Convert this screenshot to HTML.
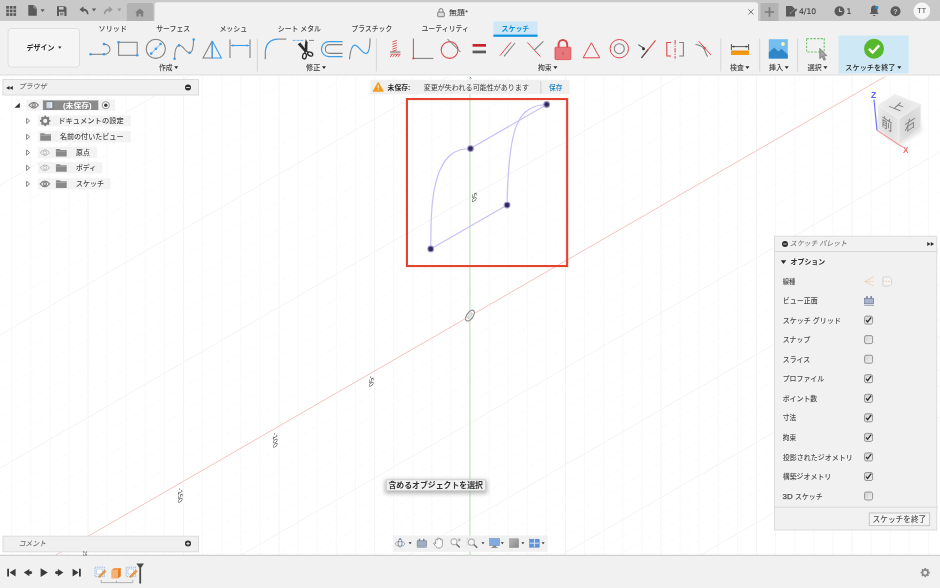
<!DOCTYPE html>
<html lang="ja"><head><meta charset="utf-8"><title>無題*</title>
<style>
html,body{margin:0;padding:0;background:#fff;overflow:hidden}
body{width:940px;height:588px;position:relative}
svg{display:block;position:absolute;left:0;top:0;will-change:transform;font-family:'Liberation Sans', 'Noto Sans CJK JP', sans-serif;}
text{white-space:pre}
</style></head><body>
<svg width="940" height="588" viewBox="0 0 940 588">
<rect x="0" y="0" width="940" height="588" fill="#ffffff"/>
<g clip-path="url(#cv)"><line x1="11.6" y1="75" x2="11.6" y2="555" stroke="#f9f9f9" stroke-width="1"/><line x1="30.7" y1="75" x2="30.7" y2="555" stroke="#f9f9f9" stroke-width="1"/><line x1="49.8" y1="75" x2="49.8" y2="555" stroke="#f9f9f9" stroke-width="1"/><line x1="68.9" y1="75" x2="68.9" y2="555" stroke="#f9f9f9" stroke-width="1"/><line x1="88.0" y1="75" x2="88.0" y2="555" stroke="#f4f4f4" stroke-width="1"/><line x1="107.1" y1="75" x2="107.1" y2="555" stroke="#f9f9f9" stroke-width="1"/><line x1="126.2" y1="75" x2="126.2" y2="555" stroke="#f9f9f9" stroke-width="1"/><line x1="145.3" y1="75" x2="145.3" y2="555" stroke="#f9f9f9" stroke-width="1"/><line x1="164.4" y1="75" x2="164.4" y2="555" stroke="#f9f9f9" stroke-width="1"/><line x1="183.5" y1="75" x2="183.5" y2="555" stroke="#f4f4f4" stroke-width="1"/><line x1="202.6" y1="75" x2="202.6" y2="555" stroke="#f9f9f9" stroke-width="1"/><line x1="221.7" y1="75" x2="221.7" y2="555" stroke="#f9f9f9" stroke-width="1"/><line x1="240.8" y1="75" x2="240.8" y2="555" stroke="#f9f9f9" stroke-width="1"/><line x1="259.9" y1="75" x2="259.9" y2="555" stroke="#f9f9f9" stroke-width="1"/><line x1="279.0" y1="75" x2="279.0" y2="555" stroke="#f4f4f4" stroke-width="1"/><line x1="298.1" y1="75" x2="298.1" y2="555" stroke="#f9f9f9" stroke-width="1"/><line x1="317.2" y1="75" x2="317.2" y2="555" stroke="#f9f9f9" stroke-width="1"/><line x1="336.3" y1="75" x2="336.3" y2="555" stroke="#f9f9f9" stroke-width="1"/><line x1="355.4" y1="75" x2="355.4" y2="555" stroke="#f9f9f9" stroke-width="1"/><line x1="374.5" y1="75" x2="374.5" y2="555" stroke="#f4f4f4" stroke-width="1"/><line x1="393.6" y1="75" x2="393.6" y2="555" stroke="#f9f9f9" stroke-width="1"/><line x1="412.7" y1="75" x2="412.7" y2="555" stroke="#f9f9f9" stroke-width="1"/><line x1="431.8" y1="75" x2="431.8" y2="555" stroke="#f9f9f9" stroke-width="1"/><line x1="450.9" y1="75" x2="450.9" y2="555" stroke="#f9f9f9" stroke-width="1"/><line x1="470.0" y1="75" x2="470.0" y2="555" stroke="#f4f4f4" stroke-width="1"/><line x1="489.1" y1="75" x2="489.1" y2="555" stroke="#f9f9f9" stroke-width="1"/><line x1="508.2" y1="75" x2="508.2" y2="555" stroke="#f9f9f9" stroke-width="1"/><line x1="527.3" y1="75" x2="527.3" y2="555" stroke="#f9f9f9" stroke-width="1"/><line x1="546.4" y1="75" x2="546.4" y2="555" stroke="#f9f9f9" stroke-width="1"/><line x1="565.5" y1="75" x2="565.5" y2="555" stroke="#f4f4f4" stroke-width="1"/><line x1="584.6" y1="75" x2="584.6" y2="555" stroke="#f9f9f9" stroke-width="1"/><line x1="603.7" y1="75" x2="603.7" y2="555" stroke="#f9f9f9" stroke-width="1"/><line x1="622.8" y1="75" x2="622.8" y2="555" stroke="#f9f9f9" stroke-width="1"/><line x1="641.9" y1="75" x2="641.9" y2="555" stroke="#f9f9f9" stroke-width="1"/><line x1="661.0" y1="75" x2="661.0" y2="555" stroke="#f4f4f4" stroke-width="1"/><line x1="680.1" y1="75" x2="680.1" y2="555" stroke="#f9f9f9" stroke-width="1"/><line x1="699.2" y1="75" x2="699.2" y2="555" stroke="#f9f9f9" stroke-width="1"/><line x1="718.3" y1="75" x2="718.3" y2="555" stroke="#f9f9f9" stroke-width="1"/><line x1="737.4" y1="75" x2="737.4" y2="555" stroke="#f9f9f9" stroke-width="1"/><line x1="756.5" y1="75" x2="756.5" y2="555" stroke="#f4f4f4" stroke-width="1"/><line x1="775.6" y1="75" x2="775.6" y2="555" stroke="#f9f9f9" stroke-width="1"/><line x1="794.7" y1="75" x2="794.7" y2="555" stroke="#f9f9f9" stroke-width="1"/><line x1="813.8" y1="75" x2="813.8" y2="555" stroke="#f9f9f9" stroke-width="1"/><line x1="832.9" y1="75" x2="832.9" y2="555" stroke="#f9f9f9" stroke-width="1"/><line x1="852.0" y1="75" x2="852.0" y2="555" stroke="#f4f4f4" stroke-width="1"/><line x1="871.1" y1="75" x2="871.1" y2="555" stroke="#f9f9f9" stroke-width="1"/><line x1="890.2" y1="75" x2="890.2" y2="555" stroke="#f9f9f9" stroke-width="1"/><line x1="909.3" y1="75" x2="909.3" y2="555" stroke="#f9f9f9" stroke-width="1"/><line x1="928.4" y1="75" x2="928.4" y2="555" stroke="#f9f9f9" stroke-width="1"/><line x1="0" y1="959.0" x2="940" y2="416.9" stroke="#f4f4f4" stroke-width="1"/><line x1="0" y1="943.6" x2="940" y2="401.4" stroke="#fbfbfb" stroke-width="1" stroke-dasharray="6 3"/><line x1="0" y1="927.8" x2="940" y2="385.6" stroke="#fbfbfb" stroke-width="1" stroke-dasharray="6 3"/><line x1="0" y1="911.8" x2="940" y2="369.6" stroke="#fbfbfb" stroke-width="1" stroke-dasharray="6 3"/><line x1="0" y1="895.4" x2="940" y2="353.2" stroke="#fbfbfb" stroke-width="1" stroke-dasharray="6 3"/><line x1="0" y1="878.8" x2="940" y2="336.6" stroke="#f4f4f4" stroke-width="1"/><line x1="0" y1="861.9" x2="940" y2="319.7" stroke="#fbfbfb" stroke-width="1" stroke-dasharray="6 3"/><line x1="0" y1="844.6" x2="940" y2="302.4" stroke="#fbfbfb" stroke-width="1" stroke-dasharray="6 3"/><line x1="0" y1="827.1" x2="940" y2="284.9" stroke="#fbfbfb" stroke-width="1" stroke-dasharray="6 3"/><line x1="0" y1="809.1" x2="940" y2="267.0" stroke="#fbfbfb" stroke-width="1" stroke-dasharray="6 3"/><line x1="0" y1="790.9" x2="940" y2="248.7" stroke="#f4f4f4" stroke-width="1"/><line x1="0" y1="772.3" x2="940" y2="230.1" stroke="#fbfbfb" stroke-width="1" stroke-dasharray="6 3"/><line x1="0" y1="753.3" x2="940" y2="211.1" stroke="#fbfbfb" stroke-width="1" stroke-dasharray="6 3"/><line x1="0" y1="734.0" x2="940" y2="191.8" stroke="#fbfbfb" stroke-width="1" stroke-dasharray="6 3"/><line x1="0" y1="714.2" x2="940" y2="172.1" stroke="#fbfbfb" stroke-width="1" stroke-dasharray="6 3"/><line x1="0" y1="694.1" x2="940" y2="151.9" stroke="#f4f4f4" stroke-width="1"/><line x1="0" y1="673.6" x2="940" y2="131.4" stroke="#fbfbfb" stroke-width="1" stroke-dasharray="6 3"/><line x1="0" y1="652.6" x2="940" y2="110.4" stroke="#fbfbfb" stroke-width="1" stroke-dasharray="6 3"/><line x1="0" y1="631.2" x2="940" y2="89.0" stroke="#fbfbfb" stroke-width="1" stroke-dasharray="6 3"/><line x1="0" y1="609.4" x2="940" y2="67.2" stroke="#fbfbfb" stroke-width="1" stroke-dasharray="6 3"/><line x1="0" y1="564.3" x2="940" y2="22.1" stroke="#fbfbfb" stroke-width="1" stroke-dasharray="6 3"/><line x1="0" y1="541.0" x2="940" y2="-1.2" stroke="#fbfbfb" stroke-width="1" stroke-dasharray="6 3"/><line x1="0" y1="517.3" x2="940" y2="-24.9" stroke="#fbfbfb" stroke-width="1" stroke-dasharray="6 3"/><line x1="0" y1="492.9" x2="940" y2="-49.2" stroke="#fbfbfb" stroke-width="1" stroke-dasharray="6 3"/><line x1="0" y1="468.1" x2="940" y2="-74.1" stroke="#f4f4f4" stroke-width="1"/><line x1="0" y1="442.7" x2="940" y2="-99.5" stroke="#fbfbfb" stroke-width="1" stroke-dasharray="6 3"/><line x1="0" y1="416.7" x2="940" y2="-125.5" stroke="#fbfbfb" stroke-width="1" stroke-dasharray="6 3"/><line x1="0" y1="390.1" x2="940" y2="-152.1" stroke="#fbfbfb" stroke-width="1" stroke-dasharray="6 3"/><line x1="0" y1="362.8" x2="940" y2="-179.3" stroke="#fbfbfb" stroke-width="1" stroke-dasharray="6 3"/><line x1="0" y1="335.0" x2="940" y2="-207.2" stroke="#f4f4f4" stroke-width="1"/><line x1="0" y1="306.4" x2="940" y2="-235.8" stroke="#fbfbfb" stroke-width="1" stroke-dasharray="6 3"/><line x1="0" y1="277.2" x2="940" y2="-265.0" stroke="#fbfbfb" stroke-width="1" stroke-dasharray="6 3"/><line x1="0" y1="247.2" x2="940" y2="-294.9" stroke="#fbfbfb" stroke-width="1" stroke-dasharray="6 3"/><line x1="0" y1="216.5" x2="940" y2="-325.6" stroke="#fbfbfb" stroke-width="1" stroke-dasharray="6 3"/><line x1="0" y1="185.1" x2="940" y2="-357.1" stroke="#f4f4f4" stroke-width="1"/><line x1="0" y1="152.8" x2="940" y2="-389.4" stroke="#fbfbfb" stroke-width="1" stroke-dasharray="6 3"/><line x1="0" y1="119.7" x2="940" y2="-422.5" stroke="#fbfbfb" stroke-width="1" stroke-dasharray="6 3"/><line x1="0" y1="85.7" x2="940" y2="-456.5" stroke="#fbfbfb" stroke-width="1" stroke-dasharray="6 3"/><line x1="0" y1="50.8" x2="940" y2="-491.4" stroke="#fbfbfb" stroke-width="1" stroke-dasharray="6 3"/><line x1="0" y1="15.0" x2="940" y2="-527.2" stroke="#f4f4f4" stroke-width="1"/><line x1="0" y1="-21.8" x2="940" y2="-564.0" stroke="#fbfbfb" stroke-width="1" stroke-dasharray="6 3"/><line x1="0" y1="-59.6" x2="940" y2="-601.8" stroke="#fbfbfb" stroke-width="1" stroke-dasharray="6 3"/><line x1="0" y1="-98.5" x2="940" y2="-640.7" stroke="#fbfbfb" stroke-width="1" stroke-dasharray="6 3"/><line x1="0" y1="-138.4" x2="940" y2="-680.6" stroke="#fbfbfb" stroke-width="1" stroke-dasharray="6 3"/><line x1="0" y1="-179.6" x2="940" y2="-721.8" stroke="#f4f4f4" stroke-width="1"/><line x1="0" y1="-221.9" x2="940" y2="-764.1" stroke="#fbfbfb" stroke-width="1" stroke-dasharray="6 3"/><line x1="0" y1="-265.5" x2="940" y2="-807.7" stroke="#fbfbfb" stroke-width="1" stroke-dasharray="6 3"/><line x1="0" y1="-310.4" x2="940" y2="-852.6" stroke="#fbfbfb" stroke-width="1" stroke-dasharray="6 3"/><line x1="0" y1="-356.7" x2="940" y2="-898.9" stroke="#fbfbfb" stroke-width="1" stroke-dasharray="6 3"/><line x1="0" y1="-404.4" x2="940" y2="-946.6" stroke="#f4f4f4" stroke-width="1"/><line x1="0" y1="-453.6" x2="940" y2="-995.8" stroke="#fbfbfb" stroke-width="1" stroke-dasharray="6 3"/><line x1="0" y1="-504.4" x2="940" y2="-1046.6" stroke="#fbfbfb" stroke-width="1" stroke-dasharray="6 3"/><line x1="0" y1="-556.9" x2="940" y2="-1099.1" stroke="#fbfbfb" stroke-width="1" stroke-dasharray="6 3"/><line x1="0" y1="-611.1" x2="940" y2="-1153.3" stroke="#fbfbfb" stroke-width="1" stroke-dasharray="6 3"/><line x1="0" y1="-667.1" x2="940" y2="-1209.3" stroke="#f4f4f4" stroke-width="1"/><line x1="0" y1="-725.1" x2="940" y2="-1267.3" stroke="#fbfbfb" stroke-width="1" stroke-dasharray="6 3"/><line x1="0" y1="-785.0" x2="940" y2="-1327.2" stroke="#fbfbfb" stroke-width="1" stroke-dasharray="6 3"/><line x1="0" y1="-847.1" x2="940" y2="-1389.3" stroke="#fbfbfb" stroke-width="1" stroke-dasharray="6 3"/><line x1="0" y1="-911.5" x2="940" y2="-1453.7" stroke="#fbfbfb" stroke-width="1" stroke-dasharray="6 3"/></g>
<defs><clipPath id="cv"><rect x="0" y="75" width="940" height="480"/></clipPath></defs>
<line x1="55.6" y1="555" x2="887.8" y2="75" stroke="#f5c3bf" stroke-width="1"/>
<line x1="469.9" y1="75" x2="469.9" y2="555" stroke="#bdebba" stroke-width="1.2"/>
<text transform="matrix(0,1,-0.866,0.5,371.6,381)" font-size="7.4" fill="#3c3c3c" text-anchor="middle" dy="0.36em">-50</text>
<text transform="matrix(0,1,-0.866,0.5,275.2,439.8)" font-size="7.4" fill="#3c3c3c" text-anchor="middle" dy="0.36em">-100</text>
<text transform="matrix(0,1,-0.866,0.5,180.6,495)" font-size="7.4" fill="#3c3c3c" text-anchor="middle" dy="0.36em">-150</text>
<text transform="matrix(0,1,-0.866,0.5,474.8,197.3)" font-size="7.4" fill="#3c3c3c" text-anchor="middle" dy="0.36em">50</text>
<g transform="translate(470,315.6) rotate(-55)"><ellipse rx="6.2" ry="3.1" fill="#ffffff" fill-opacity="0.55" stroke="#8a8a8a" stroke-width="1.2"/><ellipse rx="3.4" ry="1.2" fill="none" stroke="#a8a8a8" stroke-width="0.6"/></g>
<rect x="406.95" y="99.05" width="160.2" height="167" fill="none" stroke="#e2442e" stroke-width="2.1"/>
<path d="M430.7,248.9 C430.8,243.1 430.9,223.8 431.5,214.0 C432.1,204.2 432.8,197.6 434.2,190.2 C435.6,182.8 437.7,175.1 440.2,169.4 C442.7,163.7 445.9,159.2 449.1,156.0 C452.3,152.8 455.9,151.2 459.5,150.0 C463.1,148.8 468.7,148.8 470.5,148.6" fill="none" stroke="#cabff6" stroke-width="1.2"/>
<path d="M507.1,205.1 C507.2,201.6 507.3,191.7 507.7,184.3 C508.1,176.9 508.7,167.9 509.5,160.5 C510.3,153.1 511.1,145.8 512.5,139.6 C513.9,133.4 515.5,127.8 517.6,123.3 C519.7,118.8 522.0,115.1 525.0,112.3 C528.0,109.5 531.8,107.6 535.4,106.3 C539.0,105.0 544.8,104.8 546.7,104.5" fill="none" stroke="#cabff6" stroke-width="1.2"/>
<line x1="430.7" y1="248.9" x2="507.1" y2="205.1" stroke="#cabff6" stroke-width="1.2"/>
<line x1="470.5" y1="148.6" x2="546.7" y2="104.5" stroke="#cabff6" stroke-width="1.2"/>
<circle cx="546.7" cy="104.5" r="3.4" fill="#9d95c4"/>
<circle cx="546.7" cy="104.5" r="2.3" fill="#34265f"/>
<circle cx="470.5" cy="148.6" r="3.4" fill="#9d95c4"/>
<circle cx="470.5" cy="148.6" r="2.3" fill="#34265f"/>
<circle cx="507.1" cy="205.1" r="3.4" fill="#9d95c4"/>
<circle cx="507.1" cy="205.1" r="2.3" fill="#34265f"/>
<circle cx="430.7" cy="248.9" r="3.4" fill="#9d95c4"/>
<circle cx="430.7" cy="248.9" r="2.3" fill="#34265f"/>
<rect x="0" y="0" width="940" height="21" fill="#c9c9c9"/>
<path d="M126.8,21V5.5a2.5,2.5 0 0 1 2.5,-2.5h21.6a2.5,2.5 0 0 1 2.5,2.5V21z" fill="#b3b3b3"/>
<path d="M154.6,21V5.3a3,3 0 0 1 3,-3h597.4a3,3 0 0 1 3,3V21z" fill="#f1f1f1"/>
<rect x="0" y="21" width="940" height="54" fill="#f1f1f1"/>
<linearGradient id="tbsh" x1="0" y1="0" x2="0" y2="1"><stop offset="0" stop-color="#dcdcdc"/><stop offset="1" stop-color="#ffffff"/></linearGradient>
<rect x="0" y="74.5" width="940" height="2" fill="url(#tbsh)"/>
<rect x="6.2" y="6.0" width="2.7" height="2.7" fill="#5a5a5a"/>
<rect x="6.2" y="9.6" width="2.7" height="2.7" fill="#5a5a5a"/>
<rect x="6.2" y="13.2" width="2.7" height="2.7" fill="#5a5a5a"/>
<rect x="9.8" y="6.0" width="2.7" height="2.7" fill="#5a5a5a"/>
<rect x="9.8" y="9.6" width="2.7" height="2.7" fill="#5a5a5a"/>
<rect x="9.8" y="13.2" width="2.7" height="2.7" fill="#5a5a5a"/>
<rect x="13.4" y="6.0" width="2.7" height="2.7" fill="#5a5a5a"/>
<rect x="13.4" y="9.6" width="2.7" height="2.7" fill="#5a5a5a"/>
<rect x="13.4" y="13.2" width="2.7" height="2.7" fill="#5a5a5a"/>
<path d="M28.3,5h5.5l3,3v7.8h-8.5z" fill="#5a5a5a"/>
<path d="M34,5v3h3" fill="none" stroke="#c9c9c9" stroke-width="0.6"/>
<path d="M40.5,9.2h4.2l-2.1,2.8z" fill="#5a5a5a"/>
<path d="M57,6.2h8l1.5,1.5v8.3h-9.5z" fill="#5a5a5a"/>
<rect x="59" y="7" width="4.6" height="2.6" fill="#c9c9c9"/>
<rect x="59" y="11.8" width="5.4" height="4.2" fill="#c9c9c9"/>
<rect x="60" y="12.8" width="3.4" height="0.8" fill="#5a5a5a"/>
<rect x="60" y="14.4" width="3.4" height="0.8" fill="#5a5a5a"/>
<path d="M83.5,6.2l-4,3.3l4,3.3v-2.1c2.2,0 3.4,1.2 3.4,3.6h1.6c0,-3.6 -2,-5.6 -5,-5.6z" fill="#5a5a5a"/>
<path d="M91.9,8.6h4.2l-2.1,2.8z" fill="#5a5a5a"/>
<path d="M108.8,6.2l4,3.3l-4,3.3v-2.1c-2.2,0 -3.4,1.2 -3.4,3.6h-1.6c0,-3.6 2,-5.6 5,-5.6z" fill="#9a9a9a"/>
<path d="M117.2,8.6h4.2l-2.1,2.8z" fill="#9a9a9a"/>
<path d="M139.8,8.6l-4.6,4h1.2v4h2.4v-2.6h2v2.6h2.4v-4h1.2z" fill="#7d7d7d"/>
<path d="M439,12v-1.4a2,2 0 0 1 4,0v1.4" fill="none" stroke="#777" stroke-width="1"/>
<rect x="437.7" y="12.1" width="6.6" height="4.6" fill="#dcdcdc" stroke="#777" stroke-width="0.9" rx="0.6"/>
<text x="449" y="12.6" dy="0.31em" font-size="7.2" fill="#3a3a3a" font-weight="500" textLength="19" lengthAdjust="spacingAndGlyphs">無題*</text>
<path d="M748.3,9.3l5.2,5.2M753.5,9.3l-5.2,5.2" fill="none" stroke="#666" stroke-width="0.9"/>
<rect x="760.5" y="3" width="18" height="18" fill="#b3b3b3"/>
<path d="M769.5,7.3v9.4M764.8,12h9.4" fill="none" stroke="#7a7a7a" stroke-width="1.7"/>
<path d="M786,6h6l3,3v7.5h-9z" fill="#5a5a5a"/>
<path d="M790.5,13.5l5.5,-4.5" fill="none" stroke="#c9c9c9" stroke-width="1.4"/>
<path d="M790.8,14.2l0.6,-2l4.6,-3.8l1.3,1.5l-4.6,3.8z" fill="#5a5a5a"/>
<text x="799" y="11.3" dy="0.31em" font-size="7.7" fill="#3c3c3c" textLength="17.2" lengthAdjust="spacingAndGlyphs" font-family="DejaVu Sans, sans-serif" stroke="#444" stroke-width="0.12">4/10</text>
<circle cx="839.5" cy="11.3" r="5" fill="#5a5a5a"/>
<path d="M839.5,8.2v3.3h2.6" fill="none" stroke="#c9c9c9" stroke-width="1.2"/>
<text x="846.4" y="11.3" dy="0.31em" font-size="7.7" fill="#3c3c3c" font-family="DejaVu Sans, sans-serif" stroke="#444" stroke-width="0.12">1</text>
<path d="M874.2,5.5c2.4,0 3.2,1.8 3.2,4v2.8l1.4,1.8h-9.2l1.4,-1.8v-2.8c0,-2.2 0.8,-4 3.2,-4z" fill="#5a5a5a"/>
<path d="M873,15c0,1.6 2.4,1.6 2.4,0z" fill="#5a5a5a"/>
<rect x="875.3" y="6.1" width="3" height="3" fill="#1e90e0" rx="0.7"/>
<circle cx="895.5" cy="11.3" r="5" fill="#5a5a5a"/>
<text x="895.5" y="11.5" dy="0.31em" font-size="8" fill="#c9c9c9" font-weight="700" text-anchor="middle">?</text>
<circle cx="921.9" cy="10.9" r="8.3" fill="#f6f6f6"/>
<text x="921.7" y="11" dy="0.31em" font-size="7.4" fill="#444" text-anchor="middle" textLength="8.8" lengthAdjust="spacingAndGlyphs">TT</text>
<text x="98.6" y="28.5" dy="0.31em" font-size="7.2" fill="#444444" font-weight="500" textLength="28.4" lengthAdjust="spacingAndGlyphs">ソリッド</text>
<text x="156.2" y="28.5" dy="0.31em" font-size="7.2" fill="#444444" font-weight="500" textLength="34.0" lengthAdjust="spacingAndGlyphs">サーフェス</text>
<text x="219.4" y="28.5" dy="0.31em" font-size="7.2" fill="#444444" font-weight="500" textLength="27.8" lengthAdjust="spacingAndGlyphs">メッシュ</text>
<text x="277.8" y="28.5" dy="0.31em" font-size="7.2" fill="#444444" font-weight="500" textLength="43.1" lengthAdjust="spacingAndGlyphs">シート メタル</text>
<text x="351.5" y="28.5" dy="0.31em" font-size="7.2" fill="#444444" font-weight="500" textLength="40.7" lengthAdjust="spacingAndGlyphs">プラスチック</text>
<text x="421.4" y="28.5" dy="0.31em" font-size="7.2" fill="#444444" font-weight="500" textLength="47.6" lengthAdjust="spacingAndGlyphs">ユーティリティ</text>
<rect x="493.4" y="21.5" width="44.2" height="13.6" fill="#cfe7f6"/>
<rect x="493.4" y="34.6" width="44.2" height="2.2" fill="#0d94e0"/>
<text x="501.6" y="28.5" dy="0.31em" font-size="7.2" fill="#0b8fd6" font-weight="700" textLength="27.6" lengthAdjust="spacingAndGlyphs">スケッチ</text>
<rect x="8" y="28.5" width="71.5" height="38.5" fill="#f5f5f5" stroke="#dedede" stroke-width="1" rx="3"/>
<text x="26.6" y="47.5" dy="0.31em" font-size="7.4" fill="#2a2a2a" font-weight="700" textLength="27.8" lengthAdjust="spacingAndGlyphs">デザイン</text>
<path d="M58.099999999999994,46.5h3.4l-1.7,2.2z" fill="#2a2a2a"/>
<text x="159" y="67.4" dy="0.31em" font-size="7.2" fill="#444444" font-weight="500" textLength="13.6" lengthAdjust="spacingAndGlyphs">作成</text>
<path d="M174.20000000000002,66.25h4l-2.0,2.7z" fill="#2a2a2a"/>
<text x="306" y="67.4" dy="0.31em" font-size="7.2" fill="#444444" font-weight="500" textLength="14.4" lengthAdjust="spacingAndGlyphs">修正</text>
<path d="M322.0,66.25h4l-2.0,2.7z" fill="#2a2a2a"/>
<text x="537.9" y="67.4" dy="0.31em" font-size="7.2" fill="#444444" font-weight="500" textLength="13.9" lengthAdjust="spacingAndGlyphs">拘束</text>
<path d="M553.4,66.25h4l-2.0,2.7z" fill="#2a2a2a"/>
<text x="730" y="67.4" dy="0.31em" font-size="7.2" fill="#444444" font-weight="500" textLength="13.8" lengthAdjust="spacingAndGlyphs">検査</text>
<path d="M745.4,66.25h4l-2.0,2.7z" fill="#2a2a2a"/>
<text x="768.7" y="67.4" dy="0.31em" font-size="7.2" fill="#444444" font-weight="500" textLength="14.4" lengthAdjust="spacingAndGlyphs">挿入</text>
<path d="M784.6999999999999,66.25h4l-2.0,2.7z" fill="#2a2a2a"/>
<text x="807.4" y="67.4" dy="0.31em" font-size="7.2" fill="#444444" font-weight="500" textLength="14.4" lengthAdjust="spacingAndGlyphs">選択</text>
<path d="M823.4,66.25h4l-2.0,2.7z" fill="#2a2a2a"/>
<line x1="257.3" y1="38.5" x2="257.3" y2="71.5" stroke="#d6d6d6" stroke-width="1"/>
<line x1="376.4" y1="38.5" x2="376.4" y2="71.5" stroke="#d6d6d6" stroke-width="1"/>
<line x1="720.8" y1="38.5" x2="720.8" y2="71.5" stroke="#d6d6d6" stroke-width="1"/>
<line x1="759.7" y1="38.5" x2="759.7" y2="71.5" stroke="#d6d6d6" stroke-width="1"/>
<line x1="797.6" y1="38.5" x2="797.6" y2="71.5" stroke="#d6d6d6" stroke-width="1"/>
<path d="M90.6,54.3h13.4" fill="none" stroke="#808080" stroke-width="1.05"/>
<path d="M104,54.3a6,5.1 0 0 0 0,-10.2" fill="none" stroke="#808080" stroke-width="1.05"/>
<circle cx="90.6" cy="54.3" r="1.3" fill="#3d9cea"/>
<circle cx="104" cy="54.3" r="1.3" fill="#3d9cea"/>
<circle cx="104" cy="44.1" r="1.3" fill="#3d9cea"/>
<rect x="118.6" y="42.3" width="18.6" height="13" fill="none" stroke="#808080" stroke-width="1.05"/>
<circle cx="118.6" cy="42.3" r="1.3" fill="#3d9cea"/>
<circle cx="137.2" cy="55.3" r="1.3" fill="#3d9cea"/>
<circle cx="155.8" cy="48.8" r="9.6" fill="none" stroke="#808080" stroke-width="1.05"/>
<path d="M151.2,53.6l9.4,-9.6" fill="none" stroke="#62aeee" stroke-width="0.9"/>
<circle cx="151.2" cy="53.6" r="1.3" fill="#3d9cea"/>
<circle cx="155.9" cy="48.8" r="1.3" fill="#3d9cea"/>
<circle cx="160.6" cy="44" r="1.3" fill="#3d9cea"/>
<path d="M174.6,58.5c0,-9 2,-12.5 4.4,-13.2c3.5,-1 6,6.5 10,7.6c3.5,0.5 4.4,-6 4.6,-13.5" fill="none" stroke="#808080" stroke-width="1.05"/>
<circle cx="174.6" cy="58.7" r="1.3" fill="#3d9cea"/>
<circle cx="179" cy="45.4" r="1.3" fill="#3d9cea"/>
<circle cx="189.6" cy="52.8" r="1.3" fill="#3d9cea"/>
<circle cx="193.7" cy="39.5" r="1.3" fill="#3d9cea"/>
<path d="M212.2,41l-9.2,17h9.2z" fill="none" stroke="#808080" stroke-width="1.05"/>
<path d="M212.2,41l9.2,17h-9.2z" fill="none" stroke="#3d9cea" stroke-width="1.1"/>
<path d="M230,39.5v18.5M250,39.5v18.5" fill="none" stroke="#808080" stroke-width="1.05"/>
<path d="M231,45.5h18" fill="none" stroke="#3d9cea" stroke-width="1.1"/>
<path d="M231,45.5l2.5,-1.3v2.6zM249,45.5l-2.5,-1.3v2.6z" fill="#3d9cea"/>
<path d="M265.3,59.2V52.7" fill="none" stroke="#808080" stroke-width="1.1"/>
<path d="M265.3,52.7C265.5,45 269.2,39.5 278.1,39.1" fill="none" stroke="#3d9cea" stroke-width="1.2"/>
<path d="M278.1,39.1H286.3" fill="none" stroke="#808080" stroke-width="1.1"/>
<path d="M292.6,40.4h11.4" fill="none" stroke="#6fb6ee" stroke-width="1.0" stroke-dasharray="3 0.9"/>
<path d="M309,40.4h5" fill="none" stroke="#808080" stroke-width="1.0"/>
<path d="M297.7,44.3l2.6,-1.8l6.6,8.6l-1.8,1.4z" fill="#2c2c2c"/>
<path d="M305.7,39l1.8,3.2l-0.2,9.2l-2.4,0.4l-0.1,-6.6z" fill="#2c2c2c"/>
<ellipse cx="304.5" cy="56.1" rx="1.9" ry="2.9" fill="none" stroke="#2c2c2c" stroke-width="1.3" transform="rotate(12 304.5 56.1)"/>
<ellipse cx="310.2" cy="54" rx="2.7" ry="1.8" fill="none" stroke="#2c2c2c" stroke-width="1.3" transform="rotate(28 310.2 54)"/>
<path d="M305.3,51.4l-0.6,2M306.6,51.2l1.6,1.4" fill="none" stroke="#2c2c2c" stroke-width="1.3"/>
<path d="M342.5,41.6h-13.6a7.5,7.5 0 0 0 0,15h13.6" fill="none" stroke="#3d9cea" stroke-width="1.15"/>
<path d="M342.5,44.6h-12.8a4.4,4.4 0 0 0 0,8.8h12.8" fill="none" stroke="#808080" stroke-width="1.1"/>
<path d="M349.5,59.2c0.3,-4 0.8,-7 1.6,-9.4" fill="none" stroke="#808080" stroke-width="1.1"/>
<path d="M351.1,49.8c1,-3 2.2,-4.6 3.6,-4.7c3.8,-0.2 6.6,8.2 11.2,8.4c1.8,0 2.8,-2.2 3.4,-5.4" fill="none" stroke="#3d9cea" stroke-width="1.15"/>
<path d="M369.3,48.1c0.6,-3 0.8,-6.4 0.8,-9.8" fill="none" stroke="#808080" stroke-width="1.1"/>
<path d="M390,52h10.4" fill="none" stroke="#666" stroke-width="1"/>
<path d="M392.4,42l4.4,-1.6M392.4,44.4l4.4,-1.6M392.4,46.8l4.4,-1.6M392.4,49.2l4.4,-1.6M392.4,51.4l4.4,-1.6" fill="none" stroke="#dd464a" stroke-width="0.9"/>
<path d="M390.3,56.8l1.8,-2.4M392.9,56.8l1.8,-2.4M395.5,56.8l1.8,-2.4M398.1,56.8l1.8,-2.4" fill="none" stroke="#dd464a" stroke-width="1"/>
<path d="M390.6,54.2h9.8" fill="none" stroke="#dd464a" stroke-width="0.8"/>
<path d="M413.4,38.5v20" fill="none" stroke="#dd464a" stroke-width="1.0"/>
<path d="M413.4,58.4h20" fill="none" stroke="#808080" stroke-width="1.05"/>
<circle cx="413.4" cy="58.4" r="1.1" fill="#dd464a"/>
<circle cx="449.6" cy="50" r="8.4" fill="none" stroke="#dd464a" stroke-width="1.1"/>
<path d="M447.5,39l13,13" fill="none" stroke="#808080" stroke-width="1.05"/>
<rect x="472.6" y="44" width="13.4" height="2.7" fill="#c8242c"/>
<rect x="472.6" y="50.6" width="13.4" height="2.7" fill="#5a5a5a"/>
<path d="M500,55.6l11,-13.4" fill="none" stroke="#dd464a" stroke-width="1.0"/>
<path d="M504,56.4l11,-13.4" fill="none" stroke="#808080" stroke-width="1.05"/>
<path d="M527.4,42.5l13,14" fill="none" stroke="#dd464a" stroke-width="1.0"/>
<path d="M534.4,50l9,-8.6" fill="none" stroke="#808080" stroke-width="1.05"/>
<path d="M558.6,47.5v-3.2a4.3,4.3 0 0 1 8.6,0v3.2" fill="none" stroke="#dd464a" stroke-width="2"/>
<rect x="555" y="47.2" width="15.8" height="12.4" fill="#e7777b" stroke="#dd464a" stroke-width="0.8" rx="0.8"/>
<rect x="562.5" y="52" width="0.9" height="3" fill="#c9444a"/>
<path d="M591.4,42.8l8.3,15h-16.6z" fill="none" stroke="#dd464a" stroke-width="1.0"/>
<circle cx="619.3" cy="48.7" r="9.2" fill="none" stroke="#dd464a" stroke-width="1.0"/>
<circle cx="619.3" cy="48.7" r="5" fill="none" stroke="#808080" stroke-width="1.05"/>
<path d="M641.5,57.8l14,-17.5" fill="none" stroke="#dd464a" stroke-width="1.1"/>
<path d="M641.5,57.8l6.6,-8.2" fill="none" stroke="#555" stroke-width="1.2"/>
<path d="M638.2,44.6l5.4,3.4" fill="none" stroke="#555" stroke-width="1.1"/>
<circle cx="643.5" cy="48.8" r="1.5" fill="#333"/>
<path d="M671,42.5h-4.2v13.5h4.2" fill="none" stroke="#dd464a" stroke-width="1.1"/>
<path d="M679.2,42.5h4.2v13.5h-4.2" fill="none" stroke="#808080" stroke-width="1.1"/>
<path d="M675.1,40v18.6" fill="none" stroke="#dd464a" stroke-width="1" stroke-dasharray="4.5 1.2 1.2 1.2"/>
<path d="M695.5,44.5c4,0.5 7,2 8.6,4.4c1.6,2.6 1.6,5.6 3.6,7.6" fill="none" stroke="#808080" stroke-width="1.1"/>
<path d="M698.5,41l12.5,14" fill="none" stroke="#dd464a" stroke-width="1.0"/>
<circle cx="704.6" cy="47.8" r="1.1" fill="#dd464a"/>
<path d="M731.4,44v6M748.6,44v6" fill="none" stroke="#444" stroke-width="0.9"/>
<path d="M731.8,46.6h16.4" fill="none" stroke="#444" stroke-width="0.9"/>
<path d="M731.8,46.6l2.4,-1.2v2.4zM748.2,46.6l-2.4,-1.2v2.4z" fill="#444"/>
<rect x="731" y="50.6" width="18" height="4.4" fill="#f29a12"/>
<path d="M733,50.6v1.8M735,50.6v1.2M737,50.6v1.8M739,50.6v1.2M741,50.6v1.8M743,50.6v1.2M745,50.6v1.8M747,50.6v1.2" fill="none" stroke="#c87400" stroke-width="0.5"/>
<rect x="768.8" y="39.2" width="19" height="19.4" fill="#74bdf0"/>
<path d="M768.8,58.6v-6l5.4,-5.2l4.2,4l3,-2.6l6.4,5.6v4.2z" fill="#2f86c8"/>
<circle cx="783" cy="44" r="1.9" fill="#fdf3b0"/>
<rect x="806.6" y="38.6" width="17.6" height="13.4" fill="none" stroke="#6cc470" stroke-width="1.1" stroke-dasharray="2.2 1.3"/>
<path d="M819.8,48.4v10.2l2.3,-2.1l1.8,3.7l1.6,-0.8l-1.8,-3.6l3.1,-0.2z" fill="#a6a6a6" stroke="#666" stroke-width="0.7"/>
<rect x="838.5" y="35.5" width="70.2" height="38" fill="#cfe8f6"/>
<circle cx="874" cy="48.7" r="10" fill="#56b82c"/>
<path d="M869,48.8l3.6,3.8l6.6,-7.2" fill="none" stroke="#fff" stroke-width="2.4"/>
<text x="845.3" y="67.4" dy="0.31em" font-size="7.2" fill="#2a2a2a" font-weight="500" textLength="50.2" lengthAdjust="spacingAndGlyphs">スケッチを終了</text>
<path d="M897.3,66.25h4l-2.0,2.7z" fill="#2a2a2a"/>
<rect x="3" y="79.5" width="195.5" height="15.5" fill="#f0f0f0" stroke="#dcdcdc" stroke-width="1"/>
<path d="M9.5,86v3.8l-3.4,-1.9zM12.8,86v3.8l-3.4,-1.9z" fill="#2a2a2a"/>
<text x="18.4" y="87" dy="0.31em" font-size="7.2" fill="#727272" font-weight="500" textLength="28" lengthAdjust="spacingAndGlyphs" font-style="italic">ブラウザ</text>
<circle cx="188" cy="87.4" r="3" fill="#2e2e2e"/>
<rect x="186.2" y="87" width="3.6" height="0.9" fill="#f0f0f0"/>
<path d="M19.8,102.8v4.9h-5.3z" fill="#333"/>
<rect x="26.4" y="99.60000000000001" width="88.6" height="11.2" fill="#f3f3f3"/>
<path d="M29.000000000000004,105.2q4.7,-5.6 9.4,0q-4.7,5.6 -9.4,0z" fill="#fff" stroke="#858585" stroke-width="1.25"/>
<circle cx="33.7" cy="105.2" r="1.7" fill="#c8c8c8" stroke="#858585" stroke-width="1.1"/>
<rect x="42.9" y="100.4" width="55.4" height="9.6" fill="#8b8b8b"/>
<path d="M46.2,101.60000000000001h6.6v7h-6.6z" fill="#e8ecf2" stroke="#5c6470" stroke-width="0.7"/>
<path d="M46.6,102.0h4v6.2h-4z" fill="#cfd6e0"/>
<text x="63" y="105.3" dy="0.31em" font-size="7.2" fill="#ffffff" font-weight="700" textLength="28.6" lengthAdjust="spacingAndGlyphs">(未保存)</text>
<circle cx="105.8" cy="105.2" r="3.6" fill="#fafafa" stroke="#8a8a8a" stroke-width="0.9"/>
<circle cx="105.8" cy="105.2" r="1.7" fill="#3a3a3a"/>
<path d="M26.6,118.30000000000001l3,2.6l-3,2.6z" fill="#fff" stroke="#666" stroke-width="0.8"/>
<rect x="38" y="115.30000000000001" width="92.8" height="11.2" fill="#f3f3f3"/>
<g transform="translate(45.2,120.9)"><circle r="3.1" fill="none" stroke="#7e7e7e" stroke-width="2"/><rect x="-0.95" y="-5.2" width="1.9" height="2.4" fill="#7e7e7e" transform="rotate(0)"/><rect x="-0.95" y="-5.2" width="1.9" height="2.4" fill="#7e7e7e" transform="rotate(45)"/><rect x="-0.95" y="-5.2" width="1.9" height="2.4" fill="#7e7e7e" transform="rotate(90)"/><rect x="-0.95" y="-5.2" width="1.9" height="2.4" fill="#7e7e7e" transform="rotate(135)"/><rect x="-0.95" y="-5.2" width="1.9" height="2.4" fill="#7e7e7e" transform="rotate(180)"/><rect x="-0.95" y="-5.2" width="1.9" height="2.4" fill="#7e7e7e" transform="rotate(225)"/><rect x="-0.95" y="-5.2" width="1.9" height="2.4" fill="#7e7e7e" transform="rotate(270)"/><rect x="-0.95" y="-5.2" width="1.9" height="2.4" fill="#7e7e7e" transform="rotate(315)"/></g>
<text x="58.2" y="121.0" dy="0.31em" font-size="7.2" fill="#484848" font-weight="500" textLength="65.6" lengthAdjust="spacingAndGlyphs">ドキュメントの設定</text>
<path d="M26.6,134.20000000000002l3,2.6l-3,2.6z" fill="#fff" stroke="#666" stroke-width="0.8"/>
<rect x="38" y="131.20000000000002" width="92.8" height="11.2" fill="#f3f3f3"/>
<path d="M40.2,133.20000000000002h4l0.8,1h6v6.6h-10.8z" fill="#8a8a8a"/>
<path d="M40.2,135.4h10.8" fill="none" stroke="#b5b5b5" stroke-width="0.6"/>
<text x="59.9" y="136.9" dy="0.31em" font-size="7.2" fill="#484848" font-weight="500" textLength="63.6" lengthAdjust="spacingAndGlyphs">名前の付いたビュー</text>
<path d="M26.6,150.0l3,2.6l-3,2.6z" fill="#fff" stroke="#666" stroke-width="0.8"/>
<rect x="38" y="147.0" width="59.2" height="11.2" fill="#f3f3f3"/>
<path d="M40.199999999999996,152.6q4.7,-5.6 9.4,0q-4.7,5.6 -9.4,0z" fill="none" stroke="#b0b0b0" stroke-width="0.9"/>
<circle cx="44.9" cy="152.6" r="1.7" fill="none" stroke="#b0b0b0" stroke-width="0.7"/>
<path d="M55.9,149.0h4l0.8,1h6v6.6h-10.8z" fill="#8a8a8a"/>
<path d="M55.9,151.2h10.8" fill="none" stroke="#b5b5b5" stroke-width="0.6"/>
<text x="76" y="152.7" dy="0.31em" font-size="7.2" fill="#484848" font-weight="500" textLength="13.8" lengthAdjust="spacingAndGlyphs">原点</text>
<path d="M26.6,165.20000000000002l3,2.6l-3,2.6z" fill="#fff" stroke="#666" stroke-width="0.8"/>
<rect x="38" y="162.20000000000002" width="64.4" height="11.2" fill="#f3f3f3"/>
<path d="M40.199999999999996,167.8q4.7,-5.6 9.4,0q-4.7,5.6 -9.4,0z" fill="none" stroke="#b0b0b0" stroke-width="0.9"/>
<circle cx="44.9" cy="167.8" r="1.7" fill="none" stroke="#b0b0b0" stroke-width="0.7"/>
<path d="M55.9,164.20000000000002h4l0.8,1h6v6.6h-10.8z" fill="#8a8a8a"/>
<path d="M55.9,166.4h10.8" fill="none" stroke="#b5b5b5" stroke-width="0.6"/>
<text x="76" y="167.9" dy="0.31em" font-size="7.2" fill="#484848" font-weight="500" textLength="20" lengthAdjust="spacingAndGlyphs">ボディ</text>
<path d="M26.6,181.3l3,2.6l-3,2.6z" fill="#fff" stroke="#666" stroke-width="0.8"/>
<rect x="38" y="178.3" width="72.6" height="11.2" fill="#f3f3f3"/>
<path d="M40.199999999999996,183.9q4.7,-5.6 9.4,0q-4.7,5.6 -9.4,0z" fill="#fff" stroke="#858585" stroke-width="1.25"/>
<circle cx="44.9" cy="183.9" r="1.7" fill="#c8c8c8" stroke="#858585" stroke-width="1.1"/>
<path d="M55.9,180.3h4l0.8,1h6v6.6h-10.8z" fill="#8a8a8a"/>
<path d="M55.9,182.5h10.8" fill="none" stroke="#b5b5b5" stroke-width="0.6"/>
<text x="76" y="184.0" dy="0.31em" font-size="7.2" fill="#484848" font-weight="500" textLength="27.9" lengthAdjust="spacingAndGlyphs">スケッチ</text>
<rect x="370.5" y="79.8" width="199" height="14.4" fill="#f0f0f0"/>
<path d="M378.2,82.3l5.2,9h-10.4z" fill="#f39a1e" stroke="#f39a1e" stroke-width="0.8" stroke-linejoin="round"/>
<rect x="377.75" y="85" width="0.9" height="3.4" fill="#fff"/>
<rect x="377.75" y="89.2" width="0.9" height="0.9" fill="#fff"/>
<text x="387.6" y="87.6" dy="0.31em" font-size="7.2" fill="#2a2a2a" font-weight="700" textLength="22.7" lengthAdjust="spacingAndGlyphs">未保存:</text>
<text x="423.7" y="87.6" dy="0.31em" font-size="7.2" fill="#3a3a3a" textLength="105.3" lengthAdjust="spacingAndGlyphs">変更が失われる可能性があります</text>
<line x1="540.9" y1="81" x2="540.9" y2="93.4" stroke="#d0d0d0" stroke-width="1"/>
<text x="549" y="87.6" dy="0.31em" font-size="7.2" fill="#1d7fc4" font-weight="500" textLength="13.4" lengthAdjust="spacingAndGlyphs">保存</text>
<path d="M470,77.2l1.4,1.2" fill="none" stroke="#555" stroke-width="0.8"/>
<defs><filter id="blur2" x="-30%" y="-30%" width="160%" height="160%"><feGaussianBlur stdDeviation="2.2"/></filter><filter id="blur1"><feGaussianBlur stdDeviation="0.5"/></filter></defs>
<path d="M884,134l15,11l23,-15l-3,-8z" fill="#c4c4c4" filter="url(#blur2)" opacity="0.6"/>
<radialGradient id="cf1" cx="0.5" cy="0.5" r="0.6"><stop offset="0" stop-color="#e2e2e2"/><stop offset="1" stop-color="#f0f0f0"/></radialGradient>
<radialGradient id="cf2" cx="0.5" cy="0.5" r="0.6"><stop offset="0" stop-color="#dadada"/><stop offset="1" stop-color="#eaeaea"/></radialGradient>
<radialGradient id="cf3" cx="0.5" cy="0.5" r="0.6"><stop offset="0" stop-color="#d2d2d2"/><stop offset="1" stop-color="#e2e2e2"/></radialGradient>
<path d="M877.9,105.2L894.9,94.3L920.7,104.5L899,118.8z" fill="url(#cf1)" stroke="#f2f2f2" stroke-width="0.9" stroke-linejoin="round"/>
<path d="M877.9,105.2L899,118.8L899,144L877.9,129.7z" fill="url(#cf2)" stroke="#f0f0f0" stroke-width="0.9" stroke-linejoin="round"/>
<path d="M899,118.8L920.7,104.5L920.7,127.6L899,144z" fill="url(#cf3)" stroke="#ececec" stroke-width="0.9" stroke-linejoin="round"/>
<text transform="matrix(0.84,0.52,0,1,886.8,124)" font-size="13.5" fill="#787878" text-anchor="middle" dy="0.36em">前</text>
<text transform="matrix(0.84,-0.56,0,1,910,124.6)" font-size="13" fill="#787878" text-anchor="middle" dy="0.36em">右</text>
<text transform="matrix(0.98,0.4,-0.62,0.56,897.6,106)" font-size="13" fill="#787878" text-anchor="middle" dy="0.36em">上</text>
<line x1="874" y1="99.6" x2="877" y2="130.2" stroke="#7272f2" stroke-width="1.2"/>
<line x1="877" y1="130.2" x2="903.2" y2="147.4" stroke="#f09a9a" stroke-width="1.2"/>
<text x="873.7" y="95.4" dy="0.31em" font-size="8.6" fill="#6060f0" font-weight="700" text-anchor="middle">Z</text>
<text x="905.8" y="150.5" dy="0.31em" font-size="8.2" fill="#f06a6a" font-weight="700" text-anchor="middle">X</text>
<rect x="774.5" y="236.2" width="162.3" height="293.8" fill="#f1f1f1" stroke="#dcdcdc" stroke-width="1"/>
<line x1="774.5" y1="251.5" x2="937.5" y2="251.5" stroke="#d8d8d8" stroke-width="1"/>
<circle cx="785" cy="244" r="3" fill="#2e2e2e"/>
<rect x="783.3" y="243.6" width="3.4" height="0.8" fill="#f0f0f0"/>
<text x="789.8" y="244" dy="0.31em" font-size="7.2" fill="#808080" font-weight="500" textLength="57" lengthAdjust="spacingAndGlyphs" font-style="italic">スケッチ パレット</text>
<path d="M927.2,242.1v3.8l3.4,-1.9zM930.8,242.1v3.8l3.4,-1.9z" fill="#333"/>
<path d="M780.8,260.2h5.4l-2.7,3.8z" fill="#2a2a2a"/>
<text x="790.6" y="261.8" dy="0.31em" font-size="7.4" fill="#2a2a2a" font-weight="700" textLength="34.6" lengthAdjust="spacingAndGlyphs">オプション</text>
<text x="782.7" y="281.4" dy="0.31em" font-size="7.2" fill="#4c4c4c" font-weight="500" textLength="12.5" lengthAdjust="spacingAndGlyphs">線種</text>
<text x="782.7" y="300.9" dy="0.31em" font-size="7.2" fill="#4c4c4c" font-weight="500" textLength="35" lengthAdjust="spacingAndGlyphs">ビュー正面</text>
<text x="782.7" y="320.5" dy="0.31em" font-size="7.2" fill="#4c4c4c" font-weight="500" textLength="58.3" lengthAdjust="spacingAndGlyphs">スケッチ グリッド</text>
<text x="782.7" y="340" dy="0.31em" font-size="7.2" fill="#4c4c4c" font-weight="500" textLength="27.6" lengthAdjust="spacingAndGlyphs">スナップ</text>
<text x="782.7" y="359.6" dy="0.31em" font-size="7.2" fill="#4c4c4c" font-weight="500" textLength="27.6" lengthAdjust="spacingAndGlyphs">スライス</text>
<text x="782.7" y="379.1" dy="0.31em" font-size="7.2" fill="#4c4c4c" font-weight="500" textLength="41.5" lengthAdjust="spacingAndGlyphs">プロファイル</text>
<text x="782.7" y="398.7" dy="0.31em" font-size="7.2" fill="#4c4c4c" font-weight="500" textLength="34.6" lengthAdjust="spacingAndGlyphs">ポイント数</text>
<text x="782.7" y="418.2" dy="0.31em" font-size="7.2" fill="#4c4c4c" font-weight="500" textLength="13.4" lengthAdjust="spacingAndGlyphs">寸法</text>
<text x="782.7" y="437.8" dy="0.31em" font-size="7.2" fill="#4c4c4c" font-weight="500" textLength="13.4" lengthAdjust="spacingAndGlyphs">拘束</text>
<text x="782.7" y="457.3" dy="0.31em" font-size="7.2" fill="#4c4c4c" font-weight="500" textLength="70" lengthAdjust="spacingAndGlyphs">投影されたジオメトリ</text>
<text x="782.7" y="476.9" dy="0.31em" font-size="7.2" fill="#4c4c4c" font-weight="500" textLength="48.6" lengthAdjust="spacingAndGlyphs">構築ジオメトリ</text>
<text x="782.5" y="496.7" dy="0.31em" font-size="7.9" fill="#4c4c4c" stroke="#4c4c4c" stroke-width="0.25">3D</text>
<text x="795" y="496.4" dy="0.31em" font-size="7.2" fill="#4c4c4c" font-weight="500" textLength="27.6" lengthAdjust="spacingAndGlyphs">スケッチ</text>
<linearGradient id="cbg" x1="0" y1="0" x2="1" y2="1"><stop offset="0" stop-color="#d0d0d0"/><stop offset="1" stop-color="#f2f2f2"/></linearGradient>
<rect x="864.55" y="316.1" width="8" height="8" fill="url(#cbg)" stroke="#8c8c8c" stroke-width="0.9" rx="1.6"/>
<path d="M866.1,320.20000000000005l1.5,1.8l3.6,-4.7" fill="none" stroke="#2e2e2e" stroke-width="1.3"/>
<rect x="864.55" y="335.6" width="8" height="8" fill="url(#cbg)" stroke="#8c8c8c" stroke-width="0.9" rx="1.6"/>
<rect x="864.55" y="355.20000000000005" width="8" height="8" fill="url(#cbg)" stroke="#8c8c8c" stroke-width="0.9" rx="1.6"/>
<rect x="864.55" y="374.70000000000005" width="8" height="8" fill="url(#cbg)" stroke="#8c8c8c" stroke-width="0.9" rx="1.6"/>
<path d="M866.1,378.80000000000007l1.5,1.8l3.6,-4.7" fill="none" stroke="#2e2e2e" stroke-width="1.3"/>
<rect x="864.55" y="394.3" width="8" height="8" fill="url(#cbg)" stroke="#8c8c8c" stroke-width="0.9" rx="1.6"/>
<path d="M866.1,398.40000000000003l1.5,1.8l3.6,-4.7" fill="none" stroke="#2e2e2e" stroke-width="1.3"/>
<rect x="864.55" y="413.8" width="8" height="8" fill="url(#cbg)" stroke="#8c8c8c" stroke-width="0.9" rx="1.6"/>
<path d="M866.1,417.90000000000003l1.5,1.8l3.6,-4.7" fill="none" stroke="#2e2e2e" stroke-width="1.3"/>
<rect x="864.55" y="433.40000000000003" width="8" height="8" fill="url(#cbg)" stroke="#8c8c8c" stroke-width="0.9" rx="1.6"/>
<path d="M866.1,437.50000000000006l1.5,1.8l3.6,-4.7" fill="none" stroke="#2e2e2e" stroke-width="1.3"/>
<rect x="864.55" y="452.90000000000003" width="8" height="8" fill="url(#cbg)" stroke="#8c8c8c" stroke-width="0.9" rx="1.6"/>
<path d="M866.1,457.00000000000006l1.5,1.8l3.6,-4.7" fill="none" stroke="#2e2e2e" stroke-width="1.3"/>
<rect x="864.55" y="472.5" width="8" height="8" fill="url(#cbg)" stroke="#8c8c8c" stroke-width="0.9" rx="1.6"/>
<path d="M866.1,476.6l1.5,1.8l3.6,-4.7" fill="none" stroke="#2e2e2e" stroke-width="1.3"/>
<rect x="864.55" y="492.0" width="8" height="8" fill="url(#cbg)" stroke="#8c8c8c" stroke-width="0.9" rx="1.6"/>
<path d="M873.4,276.79999999999995l-8.4,4.6l8.4,4.6" fill="none" stroke="#f3d6bf" stroke-width="1.1"/>
<path d="M866,281.4h7.4" fill="none" stroke="#f0c8a8" stroke-width="0.8" stroke-dasharray="2 1"/>
<path d="M883,277.0h6.4l2.2,2.2v4.6l-2.2,2.2h-6.4z" fill="#f4f4f4" stroke="#d2d2d2" stroke-width="0.9"/>
<path d="M882,281.4h10" fill="none" stroke="#f3c8a8" stroke-width="0.8" stroke-dasharray="2 1"/>
<rect x="864.6" y="298.29999999999995" width="9" height="5.4" fill="#a9b4cc" stroke="#6f7c98" stroke-width="0.7"/>
<rect x="866.2" y="296.09999999999997" width="1.5" height="2.4" fill="#6f7c98"/>
<rect x="870.4" y="296.09999999999997" width="1.5" height="2.4" fill="#6f7c98"/>
<line x1="864.2" y1="305.29999999999995" x2="874" y2="305.29999999999995" stroke="#8b96b0" stroke-width="0.9"/>
<line x1="774.5" y1="507.2" x2="937.5" y2="507.2" stroke="#d8d8d8" stroke-width="1"/>
<rect x="869.3" y="513" width="60.3" height="12.6" fill="#f4f4f4" stroke="#c6c6c6" stroke-width="1"/>
<text x="872.6" y="519.3" dy="0.31em" font-size="7.6" fill="#555" font-weight="500" textLength="53.6" lengthAdjust="spacingAndGlyphs">スケッチを終了</text>
<rect x="385" y="480" width="102" height="13.5" fill="#9a9a9a" filter="url(#blur2)" opacity="0.75"/>
<rect x="386.4" y="479.8" width="99" height="10.9" fill="#f1f1f1" stroke="#c8c8c8" stroke-width="0.7" rx="1"/>
<text x="388.4" y="485.6" dy="0.31em" font-size="8" fill="#333" font-weight="700" textLength="94.6" lengthAdjust="spacingAndGlyphs">含めるオブジェクトを選択</text>
<rect x="393" y="535.5" width="154.6" height="16.3" fill="#f1f1f1"/>
<g fill="none" stroke-width="0.9"><ellipse cx="400.1" cy="543.8" rx="4.6" ry="2.2" stroke="#8fa6c4"/><ellipse cx="400.1" cy="543.2" rx="2" ry="4" stroke="#8a8a8a"/></g>
<path d="M400.1,537.8l1.6,1.8h-3.2z" fill="#5f7fa8"/>
<path d="M408.6,542.25h3l-1.5,2.1z" fill="#333"/>
<rect x="417.2" y="540.8" width="9.2" height="5.4" fill="#a4aec2" stroke="#76829c" stroke-width="0.7"/>
<rect x="418.7" y="538.8" width="1.5" height="2.2" fill="#76829c"/>
<rect x="423" y="538.8" width="1.5" height="2.2" fill="#76829c"/>
<line x1="416.8" y1="547.4" x2="426.8" y2="547.4" stroke="#99a3b8" stroke-width="0.9"/>
<path d="M435.6,544v-3.8a0.85,0.85 0 0 1 1.7,0v-1.5a0.85,0.85 0 0 1 1.7,0v0.5a0.85,0.85 0 0 1 1.7,0v0.9a0.85,0.85 0 0 1 1.7,0v4.3c0,2.4 -1.3,3.7 -3.4,3.7c-1.9,0 -2.8,-0.9 -3.9,-2.6l-1.5,-2.4c0.7,-0.7 1.5,-0.4 2,0.9z" fill="#fafafa" stroke="#8a8a8a" stroke-width="0.8"/>
<circle cx="454" cy="541.8" r="3.1" fill="#f8f8f8" stroke="#9a9a9a" stroke-width="0.9"/>
<line x1="456.4" y1="544.2" x2="459.8" y2="547.4" stroke="#6a6a6a" stroke-width="1.4"/>
<path d="M459.2,538.4v3M457.7,539.9h3" fill="none" stroke="#8a8a8a" stroke-width="0.7"/>
<rect x="467.2" y="538.6" width="6.8" height="6.4" fill="none" stroke="#b8b8b8" stroke-width="0.6" stroke-dasharray="1 0.8"/>
<circle cx="471.4" cy="542.2" r="3.1" fill="#f8f8f8" stroke="#9a9a9a" stroke-width="0.9"/>
<line x1="473.8" y1="544.6" x2="477.2" y2="547.8" stroke="#6a6a6a" stroke-width="1.4"/>
<path d="M481.5,542.25h3l-1.5,2.1z" fill="#333"/>
<rect x="489.6" y="538.6" width="9.8" height="7" fill="#82aade" stroke="#6e8fbc" stroke-width="0.6"/>
<rect x="492.8" y="545.6" width="3.4" height="1.6" fill="#8a8a8a"/>
<rect x="491.4" y="547" width="6.2" height="0.9" fill="#8a8a8a"/>
<path d="M500.8,542.25h3l-1.5,2.1z" fill="#333"/>
<linearGradient id="ngr" x1="0" y1="0" x2="1" y2="1"><stop offset="0" stop-color="#b8b8b8"/><stop offset="1" stop-color="#868686"/></linearGradient>
<rect x="509.5" y="538.8" width="9.2" height="8.8" fill="url(#ngr)" stroke="#909090" stroke-width="0.5"/>
<path d="M521.4,542.25h3l-1.5,2.1z" fill="#333"/>
<rect x="529.6" y="539.2" width="9.6" height="8" fill="#5e93d8" stroke="#4f7fc0" stroke-width="0.5"/>
<path d="M534.4,539.2v8M529.6,543.2h9.6" fill="none" stroke="#e4edf8" stroke-width="0.9"/>
<path d="M541.6,542.25h3l-1.5,2.1z" fill="#333"/>
<rect x="3" y="536.2" width="195.5" height="15.6" fill="#f0f0f0" stroke="#dcdcdc" stroke-width="1"/>
<text x="18.4" y="543.5" dy="0.31em" font-size="7.2" fill="#727272" font-weight="500" textLength="27.6" lengthAdjust="spacingAndGlyphs" font-style="italic">コメント</text>
<circle cx="188" cy="543.6" r="3" fill="#2e2e2e"/>
<rect x="186.2" y="543.2" width="3.6" height="0.9" fill="#f0f0f0"/>
<rect x="187.55" y="541.8" width="0.9" height="3.6" fill="#f0f0f0"/>
<rect x="0" y="555" width="940" height="33" fill="#f1f1f1"/>
<line x1="0" y1="555.3" x2="940" y2="555.3" stroke="#cfcfcf" stroke-width="1.2"/>
<path d="M7.2,568.8000000000001h1.8v7.6h-1.8zM15.6,568.8000000000001v7.6l-6,-3.8z" fill="#3a3a3a"/>
<path d="M29.4,569.0v7.2l-5.6,-3.6z" fill="#3a3a3a"/>
<circle cx="30.4" cy="572.6" r="1.7" fill="#3a3a3a"/>
<path d="M40.6,568.2v8.8l7.2,-4.4z" fill="#3a3a3a"/>
<path d="M57.8,569.0v7.2l5.6,-3.6z" fill="#3a3a3a"/>
<circle cx="56.8" cy="572.6" r="1.7" fill="#3a3a3a"/>
<path d="M80.8,568.8000000000001h-1.8v7.6h1.8zM72.6,568.8000000000001v7.6l6,-3.8z" fill="#3a3a3a"/>
<rect x="95" y="567.2" width="9.4" height="9.4" fill="#eef3fb" stroke="#8aa4c8" stroke-width="0.7" stroke-dasharray="1.4 0.8"/>
<rect x="96.8" y="569.0" width="5.4" height="5" fill="#fff" stroke="#9ab0d0" stroke-width="0.5"/>
<path d="M99.2,575.6l5.4,-5.6l1.4,1.4l-5.4,5.6l-1.8,0.4z" fill="#f0a03c" stroke="#b46a1a" stroke-width="0.4"/>
<path d="M111.6,570l2.4,-2h6.6v8.2l-2.4,2h-6.6z" fill="#f29a4e"/>
<path d="M111.6,570h6.6v8.2h-6.6z" fill="#f7b170"/>
<path d="M118.2,570l2.4,-2v8.2l-2.4,2z" fill="#d97c2c"/>
<rect x="126.2" y="567.2" width="9.4" height="9.4" fill="#eef3fb" stroke="#8aa4c8" stroke-width="0.7" stroke-dasharray="1.4 0.8"/>
<rect x="128.0" y="569.0" width="5.4" height="5" fill="#fff" stroke="#9ab0d0" stroke-width="0.5"/>
<path d="M130.4,575.6l5.4,-5.6l1.4,1.4l-5.4,5.6l-1.8,0.4z" fill="#f0a03c" stroke="#b46a1a" stroke-width="0.4"/>
<path d="M101.2,579.8v2.8h31.6v-2.8M116.4,580.6v2" fill="none" stroke="#9a9a9a" stroke-width="0.7"/>
<path d="M136.4,563.4h7.6l-2.9,4.4v15.6h-1.8v-15.6z" fill="#4a4a4a"/>
<g transform="translate(925.2,572.6)"><circle r="2.7" fill="none" stroke="#8a8a8a" stroke-width="1.7"/><rect x="-0.85" y="-4.6" width="1.7" height="2" fill="#8a8a8a" transform="rotate(0)"/><rect x="-0.85" y="-4.6" width="1.7" height="2" fill="#8a8a8a" transform="rotate(45)"/><rect x="-0.85" y="-4.6" width="1.7" height="2" fill="#8a8a8a" transform="rotate(90)"/><rect x="-0.85" y="-4.6" width="1.7" height="2" fill="#8a8a8a" transform="rotate(135)"/><rect x="-0.85" y="-4.6" width="1.7" height="2" fill="#8a8a8a" transform="rotate(180)"/><rect x="-0.85" y="-4.6" width="1.7" height="2" fill="#8a8a8a" transform="rotate(225)"/><rect x="-0.85" y="-4.6" width="1.7" height="2" fill="#8a8a8a" transform="rotate(270)"/><rect x="-0.85" y="-4.6" width="1.7" height="2" fill="#8a8a8a" transform="rotate(315)"/></g>
<text transform="translate(85,553.4) rotate(90)" font-size="4.5" fill="#555" text-anchor="middle" dy="0.35em">25</text>
</svg>
</body></html>
